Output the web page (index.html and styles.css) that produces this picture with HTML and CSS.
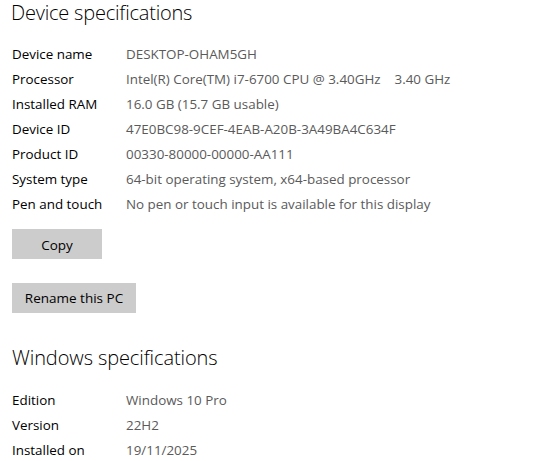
FILE: index.html
```html
<!DOCTYPE html>
<html>
<head>
<meta charset="utf-8">
<link rel="stylesheet" href="styles.css">
</head>
<body>
<div class="page">
  <h2 class="heading heading-first">Device specifications</h2>
  <dl class="specs">
    <div class="row"><dt>Device name</dt><dd>DESKTOP-OHAM5GH</dd></div>
    <div class="row"><dt>Processor</dt><dd>Intel(R) Core(TM) i7-6700 CPU @ 3.40GHz&nbsp;&nbsp;&nbsp;&nbsp;3.40 GHz</dd></div>
    <div class="row"><dt>Installed RAM</dt><dd>16.0 GB (15.7 GB usable)</dd></div>
    <div class="row"><dt>Device ID</dt><dd>47E0BC98-9CEF-4EAB-A20B-3A49BA4C634F</dd></div>
    <div class="row"><dt>Product ID</dt><dd>00330-80000-00000-AA111</dd></div>
    <div class="row"><dt>System type</dt><dd>64-bit operating system, x64-based processor</dd></div>
    <div class="row"><dt>Pen and touch</dt><dd>No pen or touch input is available for this display</dd></div>
  </dl>
  <div class="actions">
    <button class="btn btn-copy">Copy</button>
    <button class="btn btn-rename">Rename this PC</button>
  </div>
  <h2 class="heading heading-second">Windows specifications</h2>
  <dl class="specs specs-win">
    <div class="row"><dt>Edition</dt><dd>Windows 10 Pro</dd></div>
    <div class="row"><dt>Version</dt><dd>22H2</dd></div>
    <div class="row"><dt>Installed on</dt><dd>19/11/2025</dd></div>
  </dl>
</div>
</body>
</html>
```

FILE: styles.css
```css
html, body {
  margin: 0;
  padding: 0;
  background: #ffffff;
}
body {
  font-family: "Open Sans", "Noto Sans", sans-serif;
  color: #000;
  overflow: hidden;
}
.page {
  padding-left: 12px;
  display: flex;
  flex-direction: column;
  align-items: flex-start;
}
.heading {
  margin: 0;
  font-size: 20px;
  font-weight: 300;
  line-height: 28px;
  color: #000;
  letter-spacing: -0.2px;
}
.heading-first {
  margin-top: -1px;
  margin-left: -1px;
}
.heading-second {
  margin-top: 31px;
  letter-spacing: -0.1px;
}
.specs {
  margin: 15px 0 0 0;
  display: flex;
  flex-direction: column;
}
.specs-win {
  margin-top: 16px;
}
.row {
  display: flex;
  height: 25px;
  line-height: 25px;
  font-size: 13.4px;
}
.row dt {
  width: 114px;
  flex: none;
  color: #000;
}
.row dd {
  margin: 0;
  color: #5a5a5a;
  white-space: nowrap;
}
.actions {
  display: flex;
  flex-direction: column;
  align-items: flex-start;
  gap: 24px;
  margin-top: 12px;
}
.btn {
  height: 30px;
  border: none;
  background: #cccccc;
  font-family: inherit;
  font-size: 13.5px;
  line-height: 30px;
  color: #000;
  padding: 0;
}
.btn-copy { width: 90px; padding-top: 1px; }
.btn-rename { width: 124px; }
```
